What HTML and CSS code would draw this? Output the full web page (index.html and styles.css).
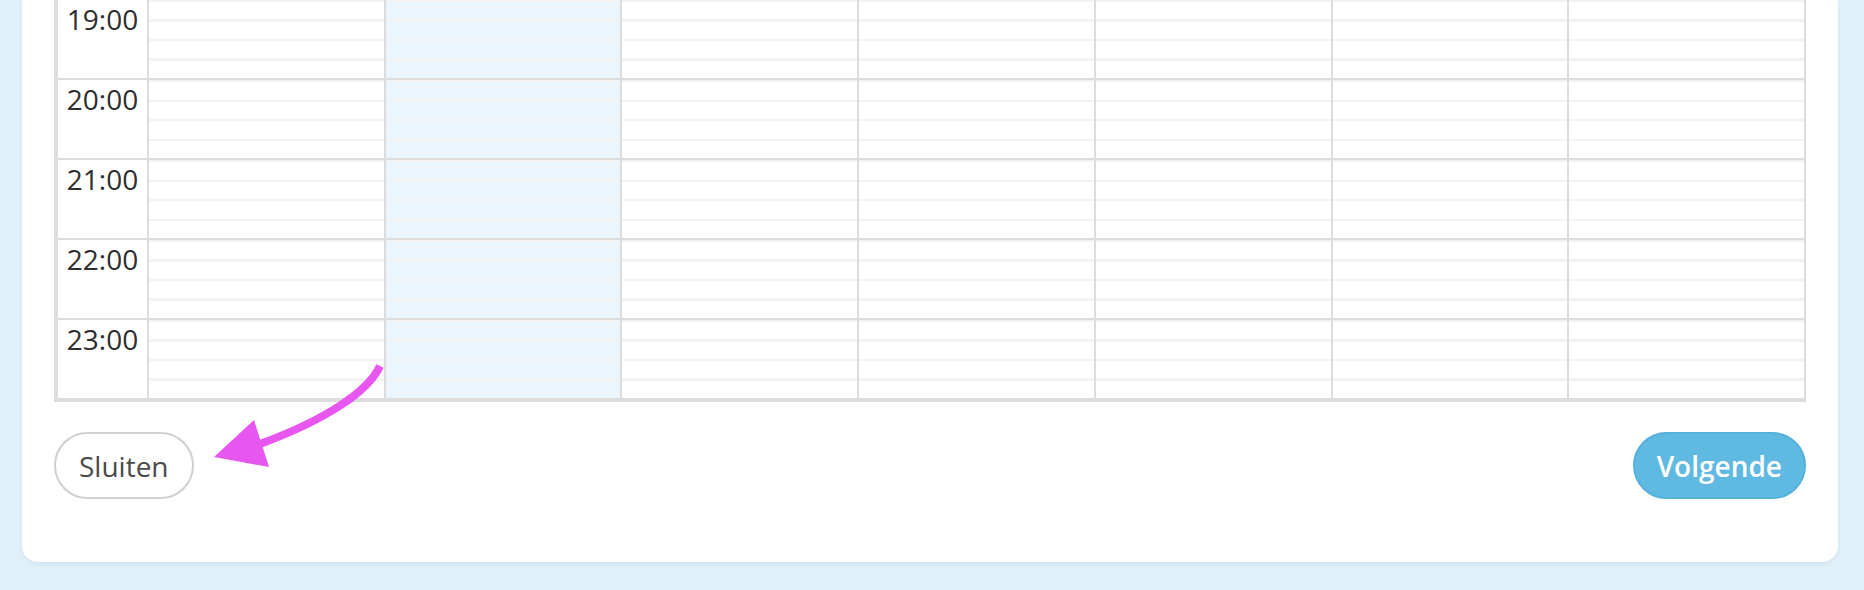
FILE: index.html
```html
<!DOCTYPE html>
<html lang="nl">
  <head>
    <meta charset="UTF-8" />
    <meta name="viewport" content="width=device-width, initial-scale=1.0" />
    <title>Beschikbaarheid kiezen</title>
    <link rel="stylesheet" href="styles.css">
  </head>
  <body>
    <div class="page">
      <div class="modal">
        <div class="calendar">
          <div class="hour-row">
            <div class="time">19:00</div>
            <div class="day"></div>
            <div class="day today"></div>
            <div class="day"></div>
            <div class="day"></div>
            <div class="day"></div>
            <div class="day"></div>
            <div class="day"></div>
          </div>
          <div class="hour-row">
            <div class="time">20:00</div>
            <div class="day"></div>
            <div class="day today"></div>
            <div class="day"></div>
            <div class="day"></div>
            <div class="day"></div>
            <div class="day"></div>
            <div class="day"></div>
          </div>
          <div class="hour-row">
            <div class="time">21:00</div>
            <div class="day"></div>
            <div class="day today"></div>
            <div class="day"></div>
            <div class="day"></div>
            <div class="day"></div>
            <div class="day"></div>
            <div class="day"></div>
          </div>
          <div class="hour-row">
            <div class="time">22:00</div>
            <div class="day"></div>
            <div class="day today"></div>
            <div class="day"></div>
            <div class="day"></div>
            <div class="day"></div>
            <div class="day"></div>
            <div class="day"></div>
          </div>
          <div class="hour-row">
            <div class="time">23:00</div>
            <div class="day"></div>
            <div class="day today"></div>
            <div class="day"></div>
            <div class="day"></div>
            <div class="day"></div>
            <div class="day"></div>
            <div class="day"></div>
          </div>
        </div>

        <div class="actions">
          <button class="btn btn-close">Sluiten</button>
          <button class="btn btn-next">Volgende</button>
        </div>
      </div>

      <!-- annotation arrow pointing at the close button -->
      <svg class="hint-arrow" width="1864" height="590" viewBox="0 0 1864 590">
        <path d="M380 366 C368 392 325 420 260 444" fill="none" stroke="#e856f0" stroke-width="8" />
        <polygon points="214,457 254,420 269,467" fill="#e856f0" />
      </svg>
    </div>
  </body>
</html>
```

FILE: styles.css
```css
body {
  margin: 0;
  font-family: "Open Sans", "Noto Sans", sans-serif;
  background: #dff0f8;
  color: #333;
}

.page {
  position: relative;
  padding: 0 26px 28px 22px;
}

/* card is scrolled down, only its bottom is visible */
.modal {
  background: #fff;
  border-radius: 0 0 16px 16px;
  padding: 0 32px 63px;
  box-shadow: 0 2px 4px rgba(0, 0, 0, 0.06);
}

.calendar {
  border-left: 2px solid #dcdcdc;
  border-right: 2px solid #dcdcdc;
  border-bottom: 2px solid #dcdcdc;
}

.hour-row {
  display: grid;
  grid-template-columns: 91px repeat(7, 1fr);
  height: 80px;
  box-sizing: border-box;
  border-bottom: 2px solid #dcdcdc;
}

.time {
  border-left: 2px solid #dcdcdc;
  font-size: 28px;
  text-align: center;
  color: #2e2e2e;
}

.day {
  border-left: 2px solid #dcdcdc;
  background-image: repeating-linear-gradient(
    to bottom,
    #f2f2f2 0,
    #f2f2f2 2px,
    transparent 2px,
    transparent 19.5px
  );
}

.day.today {
  background-color: #eaf5fd;
}

.actions {
  display: flex;
  justify-content: space-between;
  margin-top: 30px;
}

.btn {
  height: 67px;
  border-radius: 34px;
  font-family: "Open Sans", "Noto Sans", sans-serif;
  font-size: 28px;
  cursor: pointer;
}

.btn-close {
  background: #fff;
  border: 2px solid #d0d0d0;
  color: #4a4a4a;
  padding: 0 23px;
}

.btn-next {
  background: #5fb9e1;
  border: 2px solid #55b0da;
  color: #fff;
  font-weight: 600;
  padding: 0 22px;
}

.hint-arrow {
  position: absolute;
  top: 0;
  left: 0;
  pointer-events: none;
}
```
